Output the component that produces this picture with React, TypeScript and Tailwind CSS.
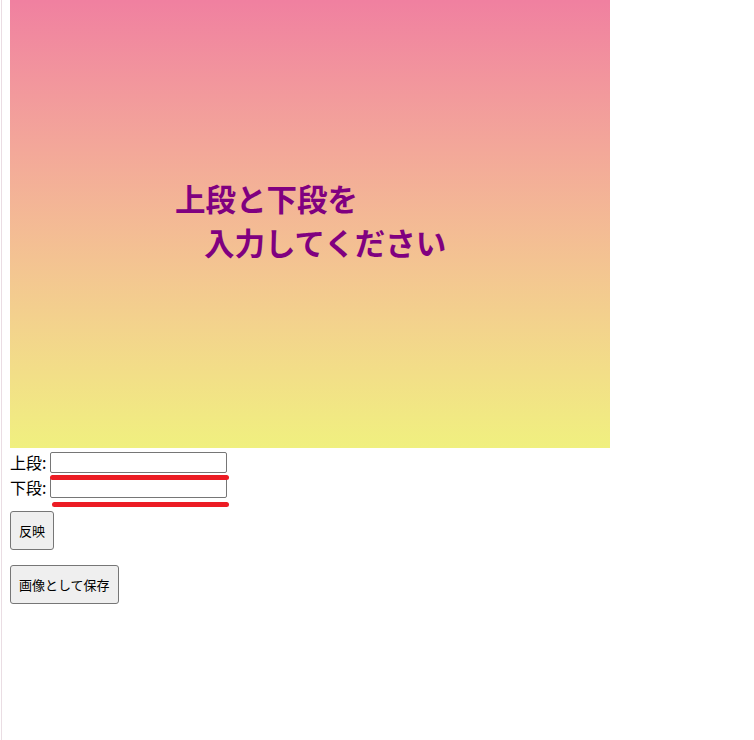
import React from "react";

export default function App() {
  const jp = { fontFamily: '"Noto Sans CJK JP", "Noto Sans", sans-serif' };
  return (
    <div className="min-h-[740px] bg-white pl-px" style={jp}>
      <div className="min-h-[740px] border-l border-[#eadde3] pl-[8px]">
        <div className="relative w-[600px] h-[448px] bg-gradient-to-b from-[#f080a0] to-[#f0f07f]">
          <div className="absolute left-[165px] top-[178px] text-[30.5px] leading-[40px] font-bold text-[#800080] whitespace-nowrap">
            上段と下段を
          </div>
          <div className="absolute left-[194px] top-[222px] text-[30.5px] leading-[40px] font-bold text-[#800080] whitespace-nowrap">
            入力してください
          </div>
        </div>
        <div className="relative pt-[4px] text-[16px] leading-[21px] text-black">
          <div className="flex items-center h-[21px]">
            <span className="w-[40px]">上段:</span>
            <input className="w-[177px] h-[21px] border border-[#767676] rounded-[2px] bg-white" />
          </div>
          <div className="h-[4px]" />
          <div className="flex items-center h-[21px]">
            <span className="w-[40px]">下段:</span>
            <input className="w-[177px] h-[21px] border border-[#767676] rounded-[2px] bg-white" />
          </div>
          <div className="absolute left-[40px] top-[27px] w-[179px] h-[5px] rounded-full bg-[#ec1c24]" />
          <div className="absolute left-[42px] top-[54px] w-[177px] h-[5px] rounded-full bg-[#ec1c24]" />
        </div>
        <div className="pt-[13px] flex flex-col items-start gap-[15px]">
          <button className="h-[39px] px-[8px] border border-[#767676] rounded-[3px] bg-[#efefef] text-[13px] text-black">
            反映
          </button>
          <button className="h-[39px] px-[8px] border border-[#767676] rounded-[3px] bg-[#efefef] text-[13px] text-black">
            画像として保存
          </button>
        </div>
      </div>
    </div>
  );
}
